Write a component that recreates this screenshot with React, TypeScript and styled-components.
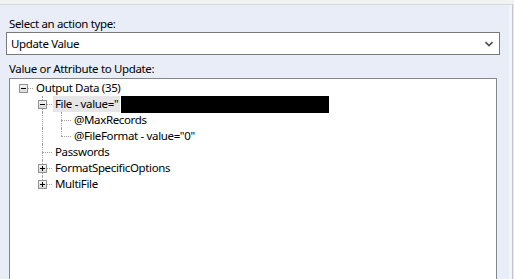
import React from "react";
import styled, { createGlobalStyle } from "styled-components";

const GlobalStyle = createGlobalStyle`
  html, body {
    margin: 0;
    padding: 0;
    overflow: hidden;
    background: #e9edf8;
  }
  body {
    font-family: "Noto Sans", "Open Sans", sans-serif;
    font-size: 11.5px;
    letter-spacing: -0.35px;
    color: #000;
  }
`;

const Window = styled.div`
  width: 514px;
  height: 279px;
  display: flex;
  flex-direction: column;
  overflow: hidden;
`;

const TopStrip = styled.div`
  height: 4px;
  flex: none;
  background: #f2f2f2;
  border-bottom: 1px solid #d6d9e0;
`;

const Body = styled.div`
  flex: 1;
  display: flex;
  min-height: 0;
`;

const Panel = styled.div`
  flex: 1;
  display: flex;
  flex-direction: column;
  padding: 11px 0 0 6px;
  background: #e9edf8;
  min-height: 0;
`;

const RightEdge = styled.div`
  width: 5px;
  flex: none;
  background: linear-gradient(
    to right,
    #f2f4fb 0,
    #f2f4fb 3px,
    #bfc5d2 3px,
    #bfc5d2 4px,
    #e9e9ec 4px
  );
`;

const Label = styled.div`
  height: 16px;
  line-height: 16px;
  padding-left: 3px;
  margin-bottom: 0;
`;

const Select = styled.div`
  width: 494px;
  height: 23px;
  box-sizing: border-box;
  border: 1px solid #7a7a7a;
  background: #fff;
  display: flex;
  align-items: center;
  justify-content: space-between;
  padding: 0 6px 0 4px;
  margin-bottom: 6px;
`;

const SelectText = styled.span`
  line-height: 20px;
`;

const TreeBox = styled.div`
  flex: 1;
  width: 488px;
  margin-left: 3px;
  margin-top: 1px;
  box-sizing: border-box;
  border: 1px solid #828790;
  border-bottom: none;
  background: #fff;
  padding: 1px 0 0 4px;
`;

const Row = styled.div`
  display: flex;
  height: 16px;
  align-items: stretch;
`;

const Cell = styled.div<{ $up?: boolean; $down?: boolean; $across?: boolean }>`
  position: relative;
  width: 19px;
  flex: none;
  &::before {
    content: "";
    position: absolute;
    left: 9px;
    top: ${(p) => (p.$up ? "0" : "8px")};
    bottom: ${(p) => (p.$down ? "0" : "8px")};
    border-left: 1px dotted #a0a0a0;
  }
  &::after {
    content: "";
    display: ${(p) => (p.$across ? "block" : "none")};
    position: absolute;
    left: 9px;
    right: 0;
    top: 8px;
    border-top: 1px dotted #a0a0a0;
  }
`;

const Expander = styled.div`
  position: absolute;
  z-index: 1;
  left: 5px;
  top: 4px;
  width: 9px;
  height: 9px;
  box-sizing: border-box;
  border: 1px solid #919191;
  background: linear-gradient(to bottom, #f4f4f4, #dadada);
  display: flex;
  align-items: center;
  justify-content: center;
`;

const Sign = styled.div<{ $plus?: boolean }>`
  position: relative;
  width: 5px;
  height: 1px;
  background: #000;
  &::after {
    content: "";
    display: ${(p) => (p.$plus ? "block" : "none")};
    position: absolute;
    left: 2px;
    top: -2px;
    width: 1px;
    height: 5px;
    background: #000;
  }
`;

const NodeText = styled.span<{ $selected?: boolean }>`
  display: flex;
  align-items: center;
  line-height: 16px;
  padding: 0 2px;
  margin-left: 1px;
  white-space: nowrap;
  background: ${(p) => (p.$selected ? "#e6e6e6" : "transparent")};
`;

const Redacted = styled.span`
  display: inline-block;
  width: 208px;
  height: 17px;
  background: #000;
  margin-left: 1px;
`;

type Guide = { up?: boolean; down?: boolean; across?: boolean; box?: "plus" | "minus" } | null;

interface Node {
  guides: Guide[];
  text: string;
  selected?: boolean;
  redacted?: boolean;
}

const rows: Node[] = [
  { guides: [{ across: true, box: "minus" }], text: "Output Data (35)" },
  {
    guides: [null, { up: true, down: true, across: true, box: "minus" }],
    text: "File - value=\"",
    selected: true,
    redacted: true,
  },
  { guides: [null, { up: true, down: true }, { up: true, down: true, across: true }], text: "@MaxRecords" },
  { guides: [null, { up: true, down: true }, { up: true, across: true }], text: "@FileFormat - value=\"0\"" },
  { guides: [null, { up: true, down: true, across: true }], text: "Passwords" },
  { guides: [null, { up: true, down: true, across: true, box: "plus" }], text: "FormatSpecificOptions" },
  { guides: [null, { up: true, across: true, box: "plus" }], text: "MultiFile" },
];

function Chevron() {
  return (
    <svg width="8" height="6" viewBox="0 0 8 6">
      <polyline points="0.5,1 4,4.5 7.5,1" fill="none" stroke="#505050" strokeWidth="1.6" />
    </svg>
  );
}

export default function App() {
  return (
    <Window>
      <GlobalStyle />
      <TopStrip />
      <Body>
        <Panel>
          <Label>Select an action type:</Label>
          <Select>
            <SelectText>Update Value</SelectText>
            <Chevron />
          </Select>
          <Label>Value or Attribute to Update:</Label>
          <TreeBox>
            {rows.map((r, i) => (
              <Row key={i}>
                {r.guides.map((g, j) => (
                  <Cell key={j} $up={g?.up} $down={g?.down} $across={g?.across}>
                    {g?.box && (
                      <Expander>
                        <Sign $plus={g.box === "plus"} />
                      </Expander>
                    )}
                  </Cell>
                ))}
                <NodeText $selected={r.selected}>{r.text}</NodeText>
                {r.redacted && <Redacted />}
              </Row>
            ))}
          </TreeBox>
        </Panel>
        <RightEdge />
      </Body>
    </Window>
  );
}
